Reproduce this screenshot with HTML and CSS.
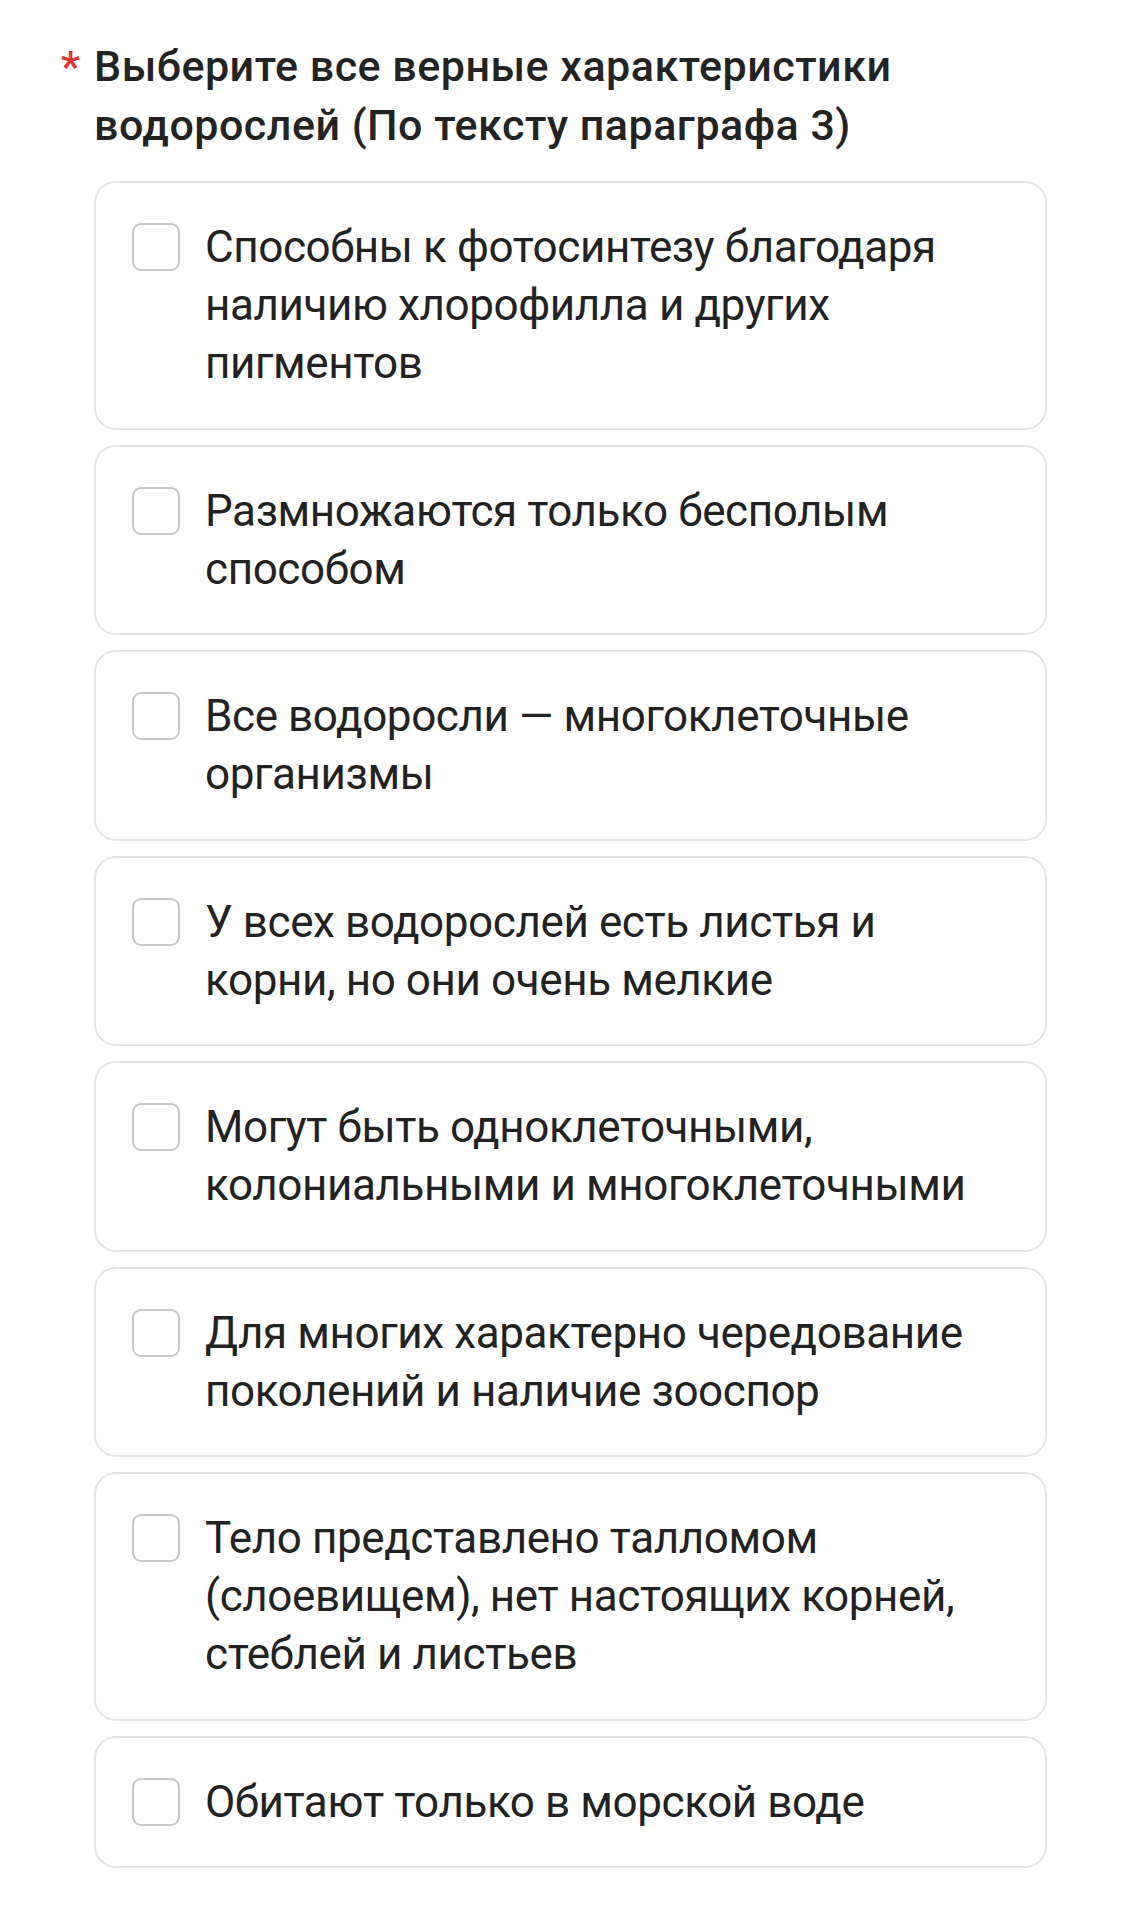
FILE: index.html
```html
<!DOCTYPE html>
<html lang="ru">
<head>
    <meta charset="UTF-8">
    <meta name="viewport" content="width=device-width, initial-scale=1.0">
    <title>Вопрос</title>
    <link rel="stylesheet" href="styles.css">
</head>
<body>
    <div class="question">
        <div class="question-title">
            <span class="required">*</span>
            <span class="title-text">Выберите все верные характеристики водорослей (По тексту параграфа 3)</span>
        </div>

        <div class="options">
            <label class="option">
                <span class="checkbox"></span>
                <span class="option-text">Способны к фотосинтезу благодаря наличию хлорофилла и других пигментов</span>
            </label>
            <label class="option">
                <span class="checkbox"></span>
                <span class="option-text">Размножаются только бесполым способом</span>
            </label>
            <label class="option">
                <span class="checkbox"></span>
                <span class="option-text">Все водоросли — многоклеточные организмы</span>
            </label>
            <label class="option">
                <span class="checkbox"></span>
                <span class="option-text">У всех водорослей есть листья и корни, но они очень мелкие</span>
            </label>
            <label class="option">
                <span class="checkbox"></span>
                <span class="option-text">Могут быть одноклеточными, колониальными и многоклеточными</span>
            </label>
            <label class="option">
                <span class="checkbox"></span>
                <span class="option-text">Для многих характерно чередование поколений и наличие зооспор</span>
            </label>
            <label class="option">
                <span class="checkbox"></span>
                <span class="option-text">Тело представлено талломом (слоевищем), нет настоящих корней, стеблей и листьев</span>
            </label>
            <label class="option">
                <span class="checkbox"></span>
                <span class="option-text">Обитают только в морской воде</span>
            </label>
        </div>
    </div>
</body>
</html>
```

FILE: styles.css
```css
body {
    font-family: Roboto, "Noto Sans", Arial, sans-serif;
    margin: 0;
    padding: 0;
    background-color: #ffffff;
    color: #212121;
}

.question {
    padding: 37px 96px 40px 61px;
}

.question-title {
    display: flex;
    align-items: flex-start;
    font-size: 43px;
    font-weight: 500;
    letter-spacing: 0.5px;
    line-height: 59px;
    color: #232323;
}

.required {
    flex: 0 0 33px;
    color: #e0322b;
}

.title-text {
    flex: 1;
    padding-right: 100px;
}

.options {
    display: flex;
    flex-direction: column;
    gap: 15px;
    margin-top: 26px;
    margin-left: 33px;
}

.option {
    display: flex;
    align-items: flex-start;
    gap: 25px;
    padding: 35px 36px 35.5px 36px;
    border: 2px solid #e4e4e4;
    border-radius: 22px;
    cursor: pointer;
}

.checkbox {
    flex: 0 0 auto;
    width: 44px;
    height: 44px;
    margin-top: 5px;
    border: 2px solid #c9c9c9;
    border-radius: 9px;
    background-color: #ffffff;
}

.option-text {
    flex: 1;
    font-size: 44px;
    letter-spacing: -0.4px;
    line-height: 58px;
    color: #222222;
}
```
